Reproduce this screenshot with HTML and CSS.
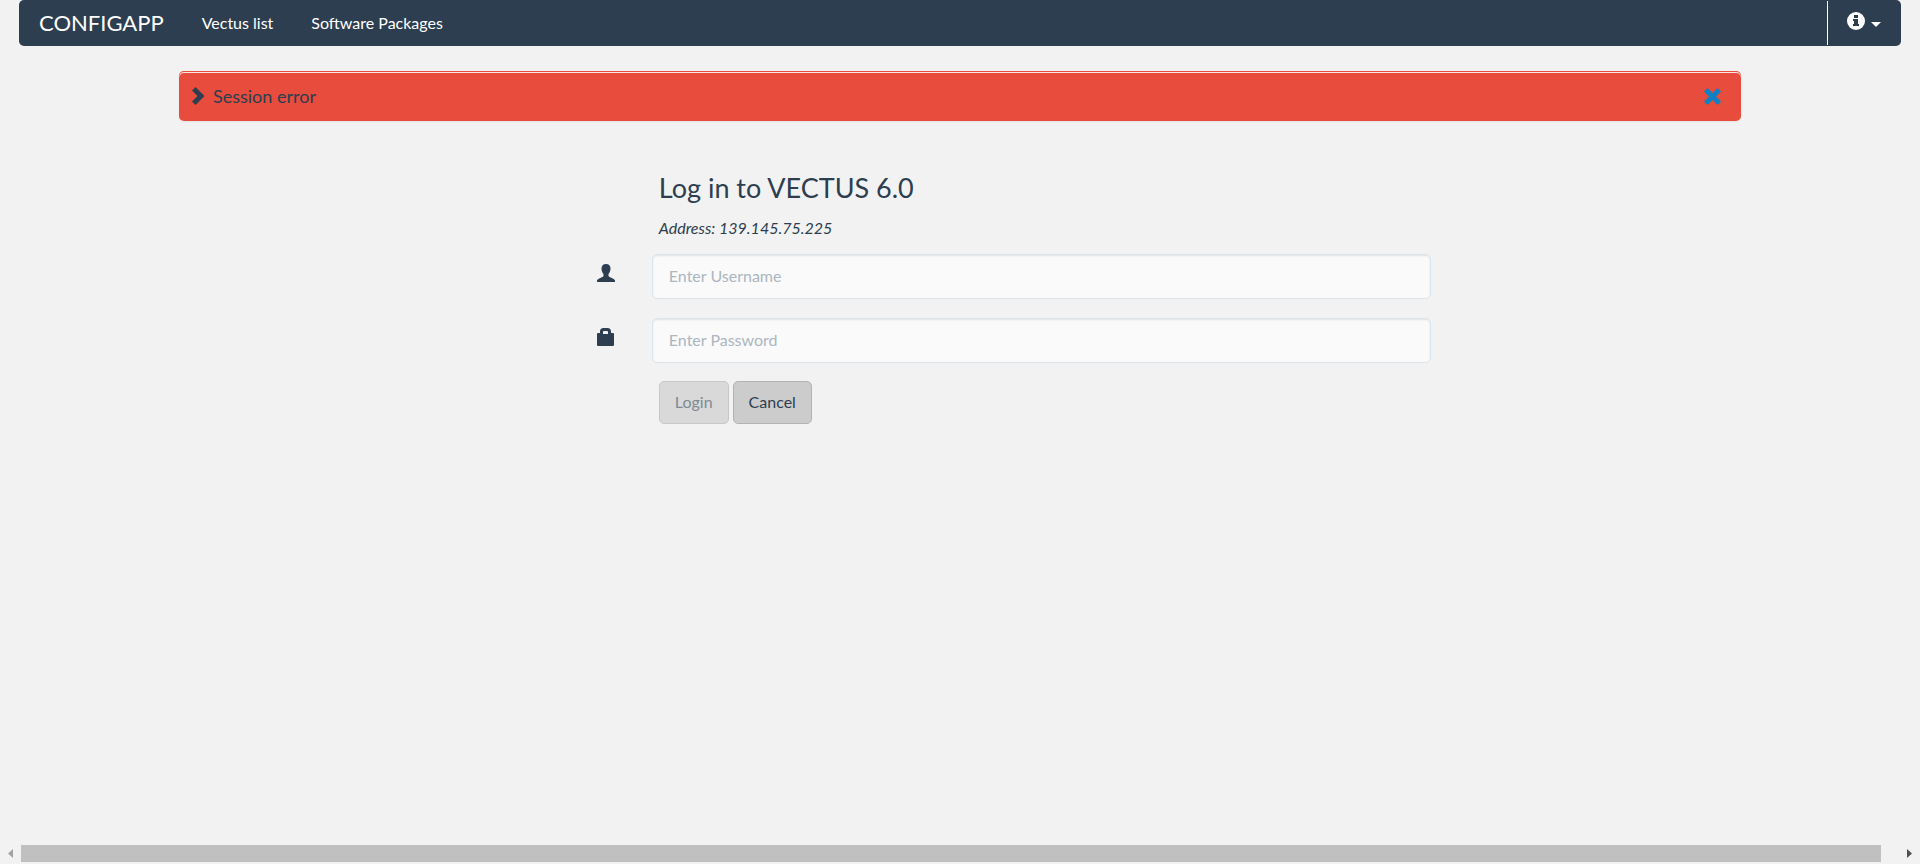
FILE: index.html
```html
<!DOCTYPE html>
<html lang="en">
<head>
<meta charset="utf-8">
<meta name="viewport" content="width=device-width, initial-scale=1">
<title>ConfigApp</title>
<link rel="stylesheet" href="styles.css">
</head>
<body>
<nav class="navbar">
  <a class="brand" href="#">CONFIGAPP</a>
  <a class="nav-link" href="#">Vectus list</a>
  <a class="nav-link" href="#">Software Packages</a>
  <button class="info-menu" type="button" aria-label="Information" aria-haspopup="true">
    <svg class="info-icon" viewBox="0 0 18 18" aria-hidden="true"><circle cx="9" cy="9" r="9" fill="#fff"/><path fill="#2c3e50" d="M7 3h4v3H7zM6 7h5v5h1v2H6v-2h1V9H6z"/></svg>
    <svg class="caret" viewBox="0 0 10 5" aria-hidden="true"><path fill="#fff" d="M0 0h10L5 5z"/></svg>
  </button>
</nav>
<main class="content">
  <div class="alert" role="alert">
    <svg class="chevron" viewBox="0 0 13 18" aria-hidden="true"><path fill="#2c3e50" d="M3.500 0 12.500 9 3.500 18 0 14.500 5.500 9 0 3.500z"/></svg>
    <span class="alert-text">Session error</span>
    <button class="close" type="button" aria-label="Close">
      <svg viewBox="0 0 17 17" aria-hidden="true"><path fill="#0e80c4" d="M3.500 0 8.500 5 13.500 0 17 3.500 12 8.500 17 13.500 13.500 17 8.500 12 3.500 17 0 13.500 5 8.500 0 3.500z"/></svg>
    </button>
  </div>
  <form class="login">
    <header class="login-head">
      <h1 class="title">Log in to VECTUS 6.0</h1>
      <p class="address">Address: 139.145.75.225</p>
    </header>
    <div class="field">
      <label for="username" aria-label="Username"><svg class="field-icon" viewBox="0 0 18 18" aria-hidden="true"><path fill="#2c3e50" d="M9 0c3 0 4.500 1.800 4.500 4.500 0 2.300-.8 4.200-2 5.500v1.500c0 .8.500 1.100 1.200 1.500l3.500 1.700c1.200.6 1.800 1.200 1.800 2.300v1H0v-1c0-1.100.6-1.700 1.800-2.300L5.300 13c.7-.4 1.200-.7 1.200-1.500V10c-1.200-1.300-2-3.200-2-5.500C4.500 1.800 6 0 9 0z"/></svg></label>
      <input class="input" id="username" type="text" placeholder="Enter Username">
    </div>
    <div class="field">
      <label for="password" aria-label="Password"><svg class="field-icon" viewBox="0 0 18 18" aria-hidden="true"><path fill="#2c3e50" fill-rule="evenodd" d="M3 5V3.500C3 1.200 4.200 0 6.500 0h4C12.800 0 14 1.200 14 3.500V5h2q1 0 1 1v11q0 1-1 1H1q-1 0-1-1V6q0-1 1-1zM6 6h5V4q0-1-1-1H7Q6 3 6 4z"/></svg></label>
      <input class="input" id="password" type="password" placeholder="Enter Password">
    </div>
    <div class="actions">
      <button class="btn" type="submit" disabled>Login</button>
      <button class="btn" type="button">Cancel</button>
    </div>
  </form>
</main>
<div class="scrollbar" aria-hidden="true">
  <svg class="arrow" viewBox="0 0 5 9"><path fill="#a3a3a3" d="M5 0v9L0 4.500z"/></svg>
  <div class="thumb"></div>
  <svg class="arrow" viewBox="0 0 5 9"><path fill="#505050" d="M0 0v9l5-4.500z"/></svg>
</div>
</body>
</html>
```
FILE: styles.css
```css
* { box-sizing: border-box; }

body {
  margin: 0;
  min-height: 100vh;
  display: flex;
  flex-direction: column;
  background: #f2f2f2;
  color: #2c3e50;
  font: 16px/24px Lato, "Open Sans", sans-serif;
}

svg { display: block; }

button {
  font: inherit;
  color: inherit;
  cursor: pointer;
}

.navbar {
  display: flex;
  align-items: center;
  height: 46px;
  margin: 0 19px;
  padding-left: 20px;
  background: #2c3e50;
  border-radius: 5px;
}

.brand,
.nav-link {
  color: #fff;
  text-decoration: none;
}

.brand {
  margin-right: 38px;
  font-size: 22px;
}

.nav-link { margin-right: 38px; }

.info-menu {
  display: flex;
  align-self: stretch;
  gap: 6px;
  margin: 1px 0 1px auto;
  padding: 11px 20px 11px 19px;
  background: none;
  border: 0;
  border-left: 1px solid #fff;
}

.info-icon {
  width: 18px;
  height: 18px;
}

.caret {
  width: 10px;
  height: 5px;
  margin-top: 10px;
}

.content {
  flex: 1;
  padding: 25px 179px;
}

.alert {
  display: flex;
  align-items: center;
  gap: 8px;
  height: 50px;
  padding: 0 20px 0 13px;
  background: #e74c3c;
  border-radius: 5px;
  box-shadow: inset 0 1px #e74c3c, inset 0 2px #fbe6e3, 0 1px 2px rgba(0, 0, 0, 0.06);
  font-size: 18px;
}

.chevron {
  width: 13px;
  height: 18px;
}

.close {
  margin-left: auto;
  padding: 0;
  background: none;
  border: 0;
}

.close svg {
  width: 17px;
  height: 17px;
}

.login {
  margin: 47px 19.85% 0 26.75%;
}

.login-head {
  padding-left: 62px;
}

.title {
  margin: 0;
  font-size: 27px;
  font-weight: 400;
  line-height: 40px;
}

.address {
  margin: 8px 0 14px;
  font-style: italic;
}

.field {
  display: grid;
  grid-template-columns: 55px 1fr;
  margin-bottom: 19px;
}

.field label { padding-top: 10px; }

.field-icon {
  width: 18px;
  height: 18px;
}

.input {
  width: 100%;
  height: 45px;
  padding: 0 16px 2px;
  background: #fafafa;
  border: 1px solid #dce4ec;
  border-radius: 5px;
  box-shadow: inset 0 1px 2px rgba(0, 0, 0, 0.1);
  color: inherit;
  font: inherit;
}

.input::placeholder {
  color: #acb6c0;
  opacity: 1;
}

.actions {
  display: flex;
  gap: 4px;
  margin-top: -1px;
  padding-left: 62px;
}

.btn {
  height: 43px;
  padding: 0 15px 2px;
  background: #ccc;
  border: 1px solid #b3b3b3;
  border-radius: 5px;
}

.btn:disabled {
  background: #d9d9d9;
  border-color: #c8c8c8;
  color: #808a94;
  cursor: default;
}

.scrollbar {
  display: flex;
  align-items: center;
  gap: 8px;
  height: 17px;
  margin-bottom: 2px;
  padding: 0 8px;
}

.arrow {
  width: 5px;
  height: 9px;
}

.thumb {
  flex: 1;
  height: 17px;
  margin-right: 18px;
  background: #c0c0c0;
}
```
